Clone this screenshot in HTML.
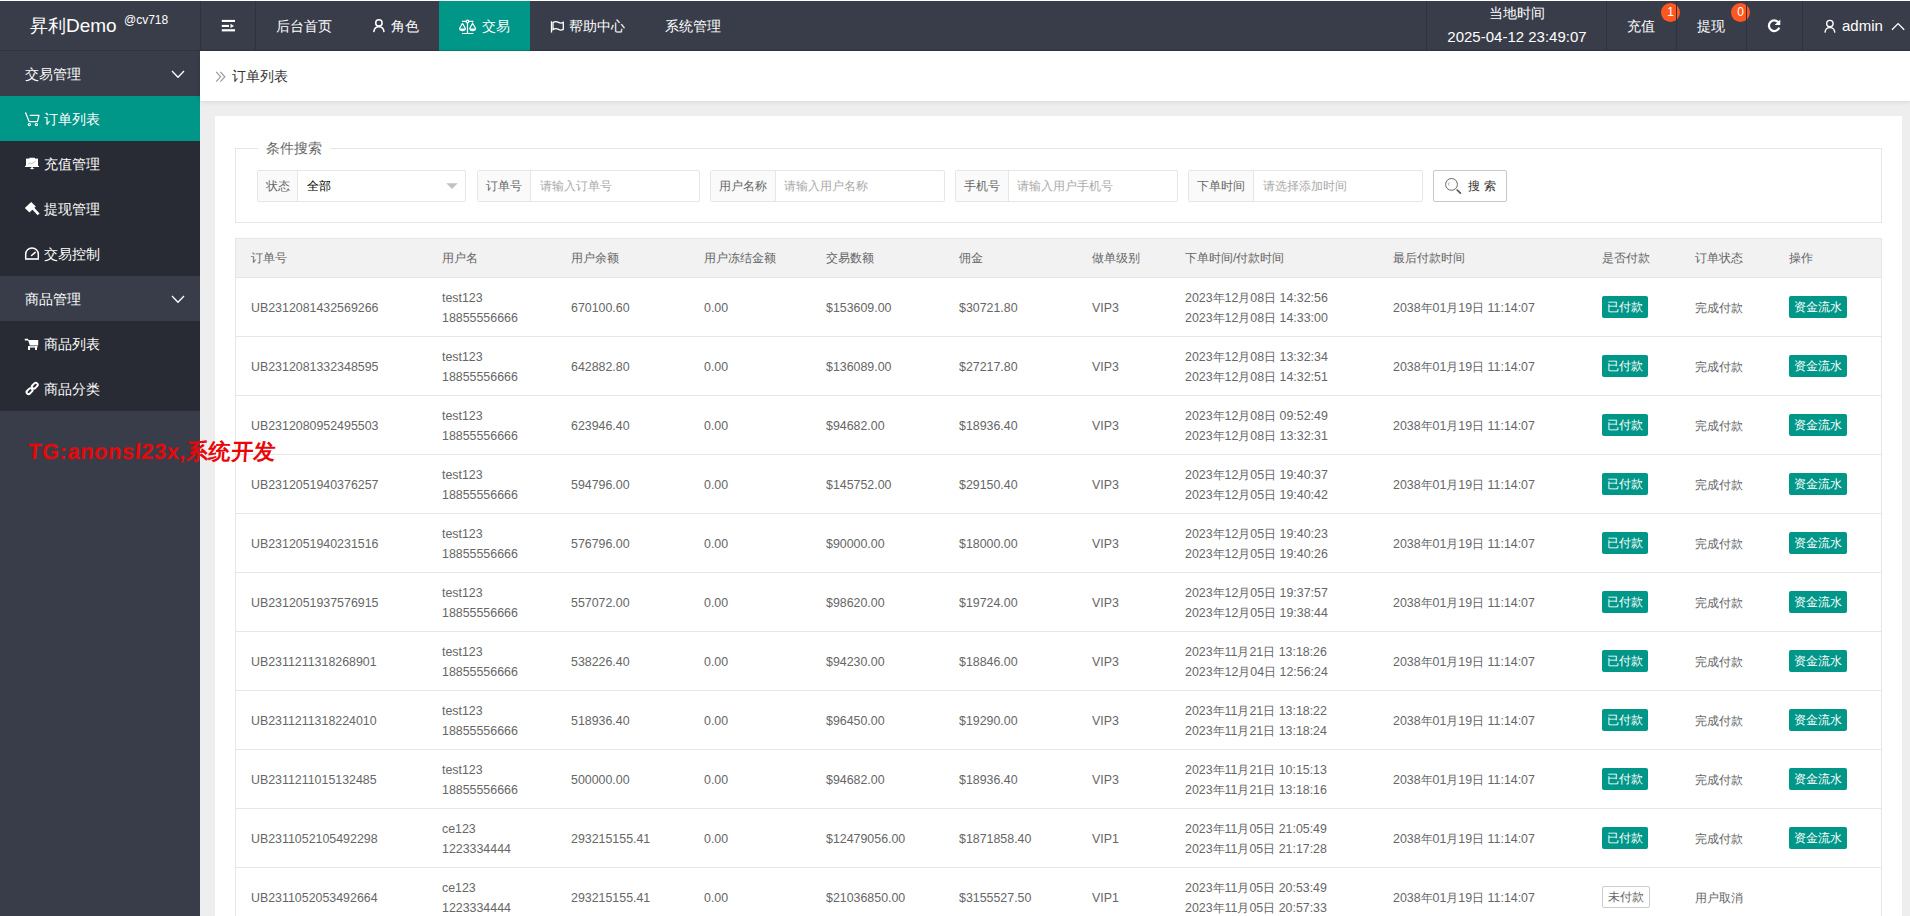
<!DOCTYPE html>
<html><head><meta charset="utf-8">
<style>
*{box-sizing:border-box;margin:0;padding:0}
html,body{width:1910px;height:916px;overflow:hidden;background:#fff}
body{font-family:"Liberation Sans",sans-serif;position:relative;color:#666}
.abs{position:absolute}
svg{position:absolute;overflow:visible}
#hdr{position:absolute;left:0;top:1px;width:1910px;height:50px;background:#393D49;color:#fff;font-size:14px}
.sep{position:absolute;top:0;width:1px;height:50px;background:#30333d}
.ht{position:absolute;top:0;line-height:50px;white-space:nowrap;color:#fff}
#side{position:absolute;left:0;top:51px;width:200px;height:865px;background:#393D49}
.si{position:absolute;left:0;width:200px;height:45px;line-height:47px;color:#fff;font-size:14px;white-space:nowrap}
.si.top{background:#393D49}
.si.child{background:#282B33}
.si.act{background:#009688}
.si span{position:absolute;left:44px;top:0}
.si.top span{left:25px}
#crumb{position:absolute;left:200px;top:51px;width:1710px;height:50px;background:#fff;box-shadow:0 1px 4px rgba(0,0,0,.1)}
#main{position:absolute;left:200px;top:101px;width:1710px;height:815px;background:#eee}
#card{position:absolute;left:215px;top:116px;width:1687px;height:800px;background:#fff}
#fs{position:absolute;left:235px;top:148px;width:1647px;height:75px;border:1px solid #e6e6e6}
#legend{position:absolute;left:258px;top:138px;padding:0 8px;background:#fff;font-size:14px;line-height:20px;color:#666}
.ig{position:absolute;top:170px;height:32px;border:1px solid #e6e6e6;border-radius:2px;font-size:12px;background:#fff}
.ig .lb{position:absolute;left:0;top:0;height:30px;line-height:30px;background:#fafafa;border-right:1px solid #e6e6e6;color:#666;text-align:center}
.ig .ph{position:absolute;top:0;line-height:30px;color:#aaa;white-space:nowrap}
#tblbox{position:absolute;left:235px;top:238px;width:1647px;height:700px;border:1px solid #e6e6e6}
.th{position:absolute;left:236px;top:239px;width:1645px;height:38px;background:#f2f2f2}
.rl{position:absolute;left:236px;width:1645px;height:1px;background:#e6e6e6}
.hc{position:absolute;top:248px;line-height:20px;font-size:12px;color:#666;white-space:nowrap}
.c{position:absolute;white-space:nowrap;color:#666;font-size:12px;line-height:20px}
.tag{position:absolute;height:22px;line-height:22px;padding:0 5px;background:#009688;color:#fff;border-radius:2px;font-size:12px;white-space:nowrap}
.tag.out{background:#fff;color:#666;border:1px solid #ccc;line-height:20px}
.badge{position:absolute;top:2px;width:19px;height:19px;border-radius:50%;background:#FF5722;color:#fff;font-size:12px;line-height:19px;text-align:center}
.c{font-size:12.4px}

</style></head>
<body>
<div id="hdr">
  <div class="ht" style="left:30px;font-size:18px">昇利<span style="font-size:19px">Demo</span></div>
  <div class="ht" style="left:124px;top:-6px;font-size:12px">@cv718</div>
  <svg style="left:221px;top:17px" width="15" height="15" viewBox="0 0 15 15"><g fill="#fff"><rect x="0.8" y="1.9" width="13.2" height="2.1"/><rect x="0.8" y="6.9" width="7.2" height="2.1"/><path d="M9.5 5.8 L13 7.9 L9.5 9.9Z"/><rect x="0.8" y="11.2" width="13.2" height="2.2"/></g></svg>
  <div class="ht" style="left:276px">后台首页</div>
  <svg style="left:372px;top:16px" width="14" height="16" viewBox="0 0 14 16"><g fill="none" stroke="#fff" stroke-width="1.5"><circle cx="6.9" cy="5.9" r="3.2"/><path d="M1.8 15.1 C2 11.5 4 9.7 6.9 9.7 C9.8 9.7 11.8 11.5 12 15.1"/></g></svg>
  <div class="ht" style="left:391px">角色</div>
  <div class="abs" style="left:439px;top:0;width:91px;height:50px;background:#009688"></div>
  <svg style="left:458px;top:17px" width="20" height="17" viewBox="0 0 20 17"><g fill="none" stroke="#fff" stroke-width="1.2"><path d="M4 3.4 H15.4 M9.5 3.4 V15.5 M4 15.5 H15.4"/><circle cx="9.5" cy="3.4" r="1.3" fill="#009688"/><path d="M4.5 5.2 L1.4 10.8 M4.5 5.2 L7.6 10.8 M11.6 10.8 L14.6 5.2 L17.7 10.8"/></g><path d="M1 10.4 H8 Q7.6 13 4.5 13.2 Q1.4 13 1 10.4Z M11.2 10.4 H18.2 Q17.8 13 14.7 13.2 Q11.6 13 11.2 10.4Z" fill="#fff"/></svg>
  <div class="ht" style="left:482px">交易</div>
  <svg style="left:549px;top:18px" width="17" height="15" viewBox="0 0 17 15"><g fill="none" stroke="#fff" stroke-width="1.3"><path d="M2.5 2.2 V13.6"/><path d="M4 3.6 C6 2.2 8 2.6 9.5 3.4 C11 4.2 12.5 4.4 14.3 3.4 V10.4 C12.5 11.4 11 11.2 9.5 10.4 C8 9.6 6 9.2 4 10.6 Z"/></g></svg>
  <div class="ht" style="left:569px">帮助中心</div>
  <div class="ht" style="left:665px">系统管理</div>
  <div class="ht" style="left:1427px;width:180px;text-align:center;line-height:22px;top:1px">当地时间</div><div class="ht" style="left:1427px;width:180px;text-align:center;line-height:22px;top:25px;font-size:15px">2025-04-12 23:49:07</div>
  <div class="ht" style="left:1627px">充值</div>
  <div class="badge" style="left:1661px">1</div>
  <div class="ht" style="left:1697px">提现</div>
  <div class="badge" style="left:1731px">0</div>
  <svg style="left:1766px;top:16px" width="16" height="16" viewBox="0 0 16 16"><path d="M12.4 5.4 A5.3 5.3 0 1 0 13.2 10.6" fill="none" stroke="#fff" stroke-width="2.2"/><path d="M14.3 2.4 V8 H8.7Z" fill="#fff"/></svg>
  <svg style="left:1823px;top:17px" width="14" height="16" viewBox="0 0 14 16"><g fill="none" stroke="#fff" stroke-width="1.4"><circle cx="6.9" cy="5.6" r="3.2"/><path d="M2 14.6 C2.2 11.3 4 9.6 6.9 9.6 C9.8 9.6 11.6 11.3 11.8 14.6"/></g></svg>
  <div class="ht" style="left:1842px;font-size:15px">admin</div>
  <svg style="left:1891px;top:21px" width="14" height="10" viewBox="0 0 14 10"><path d="M1 7.8 L7.1 1.6 L13.2 7.8" fill="none" stroke="#fff" stroke-width="1.3"/></svg>
  <div class="abs" style="left:0;top:49px;width:1910px;height:1px;background:rgba(0,0,0,.14)"></div>
  <div class="sep" style="left:200px"></div>
  <div class="sep" style="left:255px"></div>
  <div class="sep" style="left:1426px"></div>
  <div class="sep" style="left:1606px"></div>
  <div class="sep" style="left:1676px"></div>
  <div class="sep" style="left:1746px"></div>
  <div class="sep" style="left:1802px"></div>
</div>
<div id="side">
  <div class="si top" style="top:0"><span>交易管理</span></div>
  <div class="si act" style="top:45px"><span>订单列表</span></div>
  <div class="si child" style="top:90px"><span>充值管理</span></div>
  <div class="si child" style="top:135px"><span>提现管理</span></div>
  <div class="si child" style="top:180px"><span>交易控制</span></div>
  <div class="si top" style="top:225px"><span>商品管理</span></div>
  <div class="si child" style="top:270px"><span>商品列表</span></div>
  <div class="si child" style="top:315px"><span>商品分类</span></div>
</div>
<svg style="left:0;top:0" width="200" height="420" viewBox="0 0 200 420">
  <g fill="none" stroke="#fff" stroke-width="1.3"><path d="M172 71 L178 77.2 L184 71"/><path d="M172 296 L178 302.2 L184 296"/></g>
  <g fill="none" stroke="#fff" stroke-width="1.2" stroke-linejoin="round" stroke-linecap="round"><path d="M25.6 112.8 L29.2 121.7 H37.4 L39 115.4 H30.2"/><circle cx="29.3" cy="124.6" r="1.1"/><circle cx="36.4" cy="124.6" r="1.1"/></g>
  <g fill="#fff"><rect x="26" y="158.6" width="12" height="8"/><rect x="29.2" y="157.8" width="5.8" height="1.6" rx="0.6"/><rect x="25" y="165.8" width="14" height="1.2"/><rect x="31.4" y="166.8" width="1.4" height="1.8"/><ellipse cx="32.1" cy="168.6" rx="2.1" ry="0.6"/></g>
  <path d="M28 164 L30 163 L32 163.6 L35.5 161.3" fill="none" stroke="#888" stroke-width="0.5"/>
  <g fill="#fff"><path d="M24.8 208 L31.2 201.9 L35.8 206.5 L29.4 212.4Z"/><path d="M31.4 208.6 L33.4 206.8 L39.6 213.4 L37.6 215.2Z"/></g>
  <g fill="none" stroke="#fff" stroke-width="1.5"><path d="M25.7 258.5 V254.2 A6.3 6.3 0 0 1 38.3 254.2 V258.5"/></g><rect x="25" y="258.2" width="14" height="1.6" fill="#fff"/><path d="M31.6 255.5 L35.2 252.4" stroke="#fff" stroke-width="1.5" stroke-linecap="round"/>
  <g fill="#fff"><path d="M24.8 338.8 H28 L28.4 339.9 H38.2 V345.6 H29.8 L28.2 340.4 H24.8Z"/><rect x="28" y="346.2" width="9.5" height="1.4"/><rect x="28" y="346.2" width="2" height="3.8"/><rect x="35" y="346.2" width="2" height="3.8"/></g>
  <g fill="none" stroke="#fff" stroke-width="1.9"><rect x="-3.3" y="-2" width="6.6" height="4" rx="2" transform="translate(29.5 391.2) rotate(-45)"/><rect x="-3.3" y="-2" width="6.6" height="4" rx="2" transform="translate(34.8 385.7) rotate(-45)"/></g>
</svg>
<div id="main"></div>
<div id="crumb"><span class="abs" style="left:32px;top:0;line-height:50px;font-size:14px;color:#333">订单列表</span>
<svg style="left:15px;top:20px" width="12" height="12" viewBox="0 0 12 12"><path d="M1.2 0.9 L5.6 5.8 L1.2 10.7 M5.4 0.9 L9.8 5.8 L5.4 10.7" fill="none" stroke="#999" stroke-width="1.2"/></svg></div>
<div id="card"></div>
<div id="fs"></div>
<div id="legend">条件搜索</div>
<div class="ig" style="left:257px;width:209px"><div class="lb" style="width:40px">状态</div><div class="ph" style="left:49px;color:#000">全部</div><svg style="left:188px;top:12px" width="12" height="7" viewBox="0 0 12 7"><path d="M0.3 0.2 H11.7 L6 6Z" fill="#c2c2c2"/></svg></div>
<div class="ig" style="left:477px;width:223px"><div class="lb" style="width:53px">订单号</div><div class="ph" style="left:62px">请输入订单号</div></div>
<div class="ig" style="left:710px;width:235px"><div class="lb" style="width:65px">用户名称</div><div class="ph" style="left:73px">请输入用户名称</div></div>
<div class="ig" style="left:955px;width:223px"><div class="lb" style="width:53px">手机号</div><div class="ph" style="left:61px">请输入用户手机号</div></div>
<div class="ig" style="left:1188px;width:235px"><div class="lb" style="width:65px">下单时间</div><div class="ph" style="left:74px">请选择添加时间</div></div>
<div class="abs" style="left:1433px;top:170px;width:74px;height:32px;border:1px solid #c9c9c9;border-radius:2px;background:#fff"></div>
<svg style="left:1443px;top:176px" width="20" height="20" viewBox="0 0 20 20"><circle cx="8.5" cy="8.4" r="5.9" fill="none" stroke="#555" stroke-width="0.9"/><path d="M14.2 14 L17.4 17.2" stroke="#555" stroke-width="1.7" stroke-linecap="round"/><path d="M6 6.5 Q5.2 8 6 9.5" fill="none" stroke="#777" stroke-width="0.6"/></svg>
<div class="abs" style="left:1468px;top:170px;line-height:32px;font-size:12px;color:#333;letter-spacing:4px">搜索</div>
<div class="abs" style="left:27px;top:437px;font-size:22px;font-weight:bold;color:#e8080a;white-space:nowrap;z-index:5;letter-spacing:0.5px;transform:skewX(-4deg);transform-origin:0 100%">TG:anonsl23x,系统开发</div>

<div id="tblwrap">
<div id="tblbox"></div>
<div class="th"></div><div class="rl" style="top:277px"></div><div class="hc" style="left:251px">订单号</div><div class="hc" style="left:442px">用户名</div><div class="hc" style="left:571px">用户余额</div><div class="hc" style="left:704px">用户冻结金额</div><div class="hc" style="left:826px">交易数额</div><div class="hc" style="left:959px">佣金</div><div class="hc" style="left:1092px">做单级别</div><div class="hc" style="left:1185px">下单时间/付款时间</div><div class="hc" style="left:1393px">最后付款时间</div><div class="hc" style="left:1602px">是否付款</div><div class="hc" style="left:1695px">订单状态</div><div class="hc" style="left:1789px">操作</div><div class="rl" style="top:336px"></div><div class="c num" style="left:251px;top:298px">UB2312081432569266</div><div class="c num" style="left:442px;top:288px">test123<br>18855556666</div><div class="c num" style="left:571px;top:298px">670100.60</div><div class="c num" style="left:704px;top:298px">0.00</div><div class="c num" style="left:826px;top:298px">$153609.00</div><div class="c num" style="left:959px;top:298px">$30721.80</div><div class="c num" style="left:1092px;top:298px">VIP3</div><div class="c dt" style="left:1185px;top:288px">2023年12月08日 14:32:56<br>2023年12月08日 14:33:00</div><div class="c dt" style="left:1393px;top:298px">2038年01月19日 11:14:07</div><div class="tag" style="left:1602px;top:296px">已付款</div><div class="c cj" style="left:1695px;top:298px">完成付款</div><div class="tag" style="left:1789px;top:296px">资金流水</div><div class="rl" style="top:395px"></div><div class="c num" style="left:251px;top:357px">UB2312081332348595</div><div class="c num" style="left:442px;top:347px">test123<br>18855556666</div><div class="c num" style="left:571px;top:357px">642882.80</div><div class="c num" style="left:704px;top:357px">0.00</div><div class="c num" style="left:826px;top:357px">$136089.00</div><div class="c num" style="left:959px;top:357px">$27217.80</div><div class="c num" style="left:1092px;top:357px">VIP3</div><div class="c dt" style="left:1185px;top:347px">2023年12月08日 13:32:34<br>2023年12月08日 14:32:51</div><div class="c dt" style="left:1393px;top:357px">2038年01月19日 11:14:07</div><div class="tag" style="left:1602px;top:355px">已付款</div><div class="c cj" style="left:1695px;top:357px">完成付款</div><div class="tag" style="left:1789px;top:355px">资金流水</div><div class="rl" style="top:454px"></div><div class="c num" style="left:251px;top:416px">UB2312080952495503</div><div class="c num" style="left:442px;top:406px">test123<br>18855556666</div><div class="c num" style="left:571px;top:416px">623946.40</div><div class="c num" style="left:704px;top:416px">0.00</div><div class="c num" style="left:826px;top:416px">$94682.00</div><div class="c num" style="left:959px;top:416px">$18936.40</div><div class="c num" style="left:1092px;top:416px">VIP3</div><div class="c dt" style="left:1185px;top:406px">2023年12月08日 09:52:49<br>2023年12月08日 13:32:31</div><div class="c dt" style="left:1393px;top:416px">2038年01月19日 11:14:07</div><div class="tag" style="left:1602px;top:414px">已付款</div><div class="c cj" style="left:1695px;top:416px">完成付款</div><div class="tag" style="left:1789px;top:414px">资金流水</div><div class="rl" style="top:513px"></div><div class="c num" style="left:251px;top:475px">UB2312051940376257</div><div class="c num" style="left:442px;top:465px">test123<br>18855556666</div><div class="c num" style="left:571px;top:475px">594796.00</div><div class="c num" style="left:704px;top:475px">0.00</div><div class="c num" style="left:826px;top:475px">$145752.00</div><div class="c num" style="left:959px;top:475px">$29150.40</div><div class="c num" style="left:1092px;top:475px">VIP3</div><div class="c dt" style="left:1185px;top:465px">2023年12月05日 19:40:37<br>2023年12月05日 19:40:42</div><div class="c dt" style="left:1393px;top:475px">2038年01月19日 11:14:07</div><div class="tag" style="left:1602px;top:473px">已付款</div><div class="c cj" style="left:1695px;top:475px">完成付款</div><div class="tag" style="left:1789px;top:473px">资金流水</div><div class="rl" style="top:572px"></div><div class="c num" style="left:251px;top:534px">UB2312051940231516</div><div class="c num" style="left:442px;top:524px">test123<br>18855556666</div><div class="c num" style="left:571px;top:534px">576796.00</div><div class="c num" style="left:704px;top:534px">0.00</div><div class="c num" style="left:826px;top:534px">$90000.00</div><div class="c num" style="left:959px;top:534px">$18000.00</div><div class="c num" style="left:1092px;top:534px">VIP3</div><div class="c dt" style="left:1185px;top:524px">2023年12月05日 19:40:23<br>2023年12月05日 19:40:26</div><div class="c dt" style="left:1393px;top:534px">2038年01月19日 11:14:07</div><div class="tag" style="left:1602px;top:532px">已付款</div><div class="c cj" style="left:1695px;top:534px">完成付款</div><div class="tag" style="left:1789px;top:532px">资金流水</div><div class="rl" style="top:631px"></div><div class="c num" style="left:251px;top:593px">UB2312051937576915</div><div class="c num" style="left:442px;top:583px">test123<br>18855556666</div><div class="c num" style="left:571px;top:593px">557072.00</div><div class="c num" style="left:704px;top:593px">0.00</div><div class="c num" style="left:826px;top:593px">$98620.00</div><div class="c num" style="left:959px;top:593px">$19724.00</div><div class="c num" style="left:1092px;top:593px">VIP3</div><div class="c dt" style="left:1185px;top:583px">2023年12月05日 19:37:57<br>2023年12月05日 19:38:44</div><div class="c dt" style="left:1393px;top:593px">2038年01月19日 11:14:07</div><div class="tag" style="left:1602px;top:591px">已付款</div><div class="c cj" style="left:1695px;top:593px">完成付款</div><div class="tag" style="left:1789px;top:591px">资金流水</div><div class="rl" style="top:690px"></div><div class="c num" style="left:251px;top:652px">UB2311211318268901</div><div class="c num" style="left:442px;top:642px">test123<br>18855556666</div><div class="c num" style="left:571px;top:652px">538226.40</div><div class="c num" style="left:704px;top:652px">0.00</div><div class="c num" style="left:826px;top:652px">$94230.00</div><div class="c num" style="left:959px;top:652px">$18846.00</div><div class="c num" style="left:1092px;top:652px">VIP3</div><div class="c dt" style="left:1185px;top:642px">2023年11月21日 13:18:26<br>2023年12月04日 12:56:24</div><div class="c dt" style="left:1393px;top:652px">2038年01月19日 11:14:07</div><div class="tag" style="left:1602px;top:650px">已付款</div><div class="c cj" style="left:1695px;top:652px">完成付款</div><div class="tag" style="left:1789px;top:650px">资金流水</div><div class="rl" style="top:749px"></div><div class="c num" style="left:251px;top:711px">UB2311211318224010</div><div class="c num" style="left:442px;top:701px">test123<br>18855556666</div><div class="c num" style="left:571px;top:711px">518936.40</div><div class="c num" style="left:704px;top:711px">0.00</div><div class="c num" style="left:826px;top:711px">$96450.00</div><div class="c num" style="left:959px;top:711px">$19290.00</div><div class="c num" style="left:1092px;top:711px">VIP3</div><div class="c dt" style="left:1185px;top:701px">2023年11月21日 13:18:22<br>2023年11月21日 13:18:24</div><div class="c dt" style="left:1393px;top:711px">2038年01月19日 11:14:07</div><div class="tag" style="left:1602px;top:709px">已付款</div><div class="c cj" style="left:1695px;top:711px">完成付款</div><div class="tag" style="left:1789px;top:709px">资金流水</div><div class="rl" style="top:808px"></div><div class="c num" style="left:251px;top:770px">UB2311211015132485</div><div class="c num" style="left:442px;top:760px">test123<br>18855556666</div><div class="c num" style="left:571px;top:770px">500000.00</div><div class="c num" style="left:704px;top:770px">0.00</div><div class="c num" style="left:826px;top:770px">$94682.00</div><div class="c num" style="left:959px;top:770px">$18936.40</div><div class="c num" style="left:1092px;top:770px">VIP3</div><div class="c dt" style="left:1185px;top:760px">2023年11月21日 10:15:13<br>2023年11月21日 13:18:16</div><div class="c dt" style="left:1393px;top:770px">2038年01月19日 11:14:07</div><div class="tag" style="left:1602px;top:768px">已付款</div><div class="c cj" style="left:1695px;top:770px">完成付款</div><div class="tag" style="left:1789px;top:768px">资金流水</div><div class="rl" style="top:867px"></div><div class="c num" style="left:251px;top:829px">UB2311052105492298</div><div class="c num" style="left:442px;top:819px">ce123<br>1223334444</div><div class="c num" style="left:571px;top:829px">293215155.41</div><div class="c num" style="left:704px;top:829px">0.00</div><div class="c num" style="left:826px;top:829px">$12479056.00</div><div class="c num" style="left:959px;top:829px">$1871858.40</div><div class="c num" style="left:1092px;top:829px">VIP1</div><div class="c dt" style="left:1185px;top:819px">2023年11月05日 21:05:49<br>2023年11月05日 21:17:28</div><div class="c dt" style="left:1393px;top:829px">2038年01月19日 11:14:07</div><div class="tag" style="left:1602px;top:827px">已付款</div><div class="c cj" style="left:1695px;top:829px">完成付款</div><div class="tag" style="left:1789px;top:827px">资金流水</div><div class="rl" style="top:926px"></div><div class="c num" style="left:251px;top:888px">UB2311052053492664</div><div class="c num" style="left:442px;top:878px">ce123<br>1223334444</div><div class="c num" style="left:571px;top:888px">293215155.41</div><div class="c num" style="left:704px;top:888px">0.00</div><div class="c num" style="left:826px;top:888px">$21036850.00</div><div class="c num" style="left:959px;top:888px">$3155527.50</div><div class="c num" style="left:1092px;top:888px">VIP1</div><div class="c dt" style="left:1185px;top:878px">2023年11月05日 20:53:49<br>2023年11月05日 20:57:33</div><div class="c dt" style="left:1393px;top:888px">2038年01月19日 11:14:07</div><div class="tag out" style="left:1602px;top:886px">未付款</div><div class="c cj" style="left:1695px;top:888px">用户取消</div>
</div>
</body></html>
